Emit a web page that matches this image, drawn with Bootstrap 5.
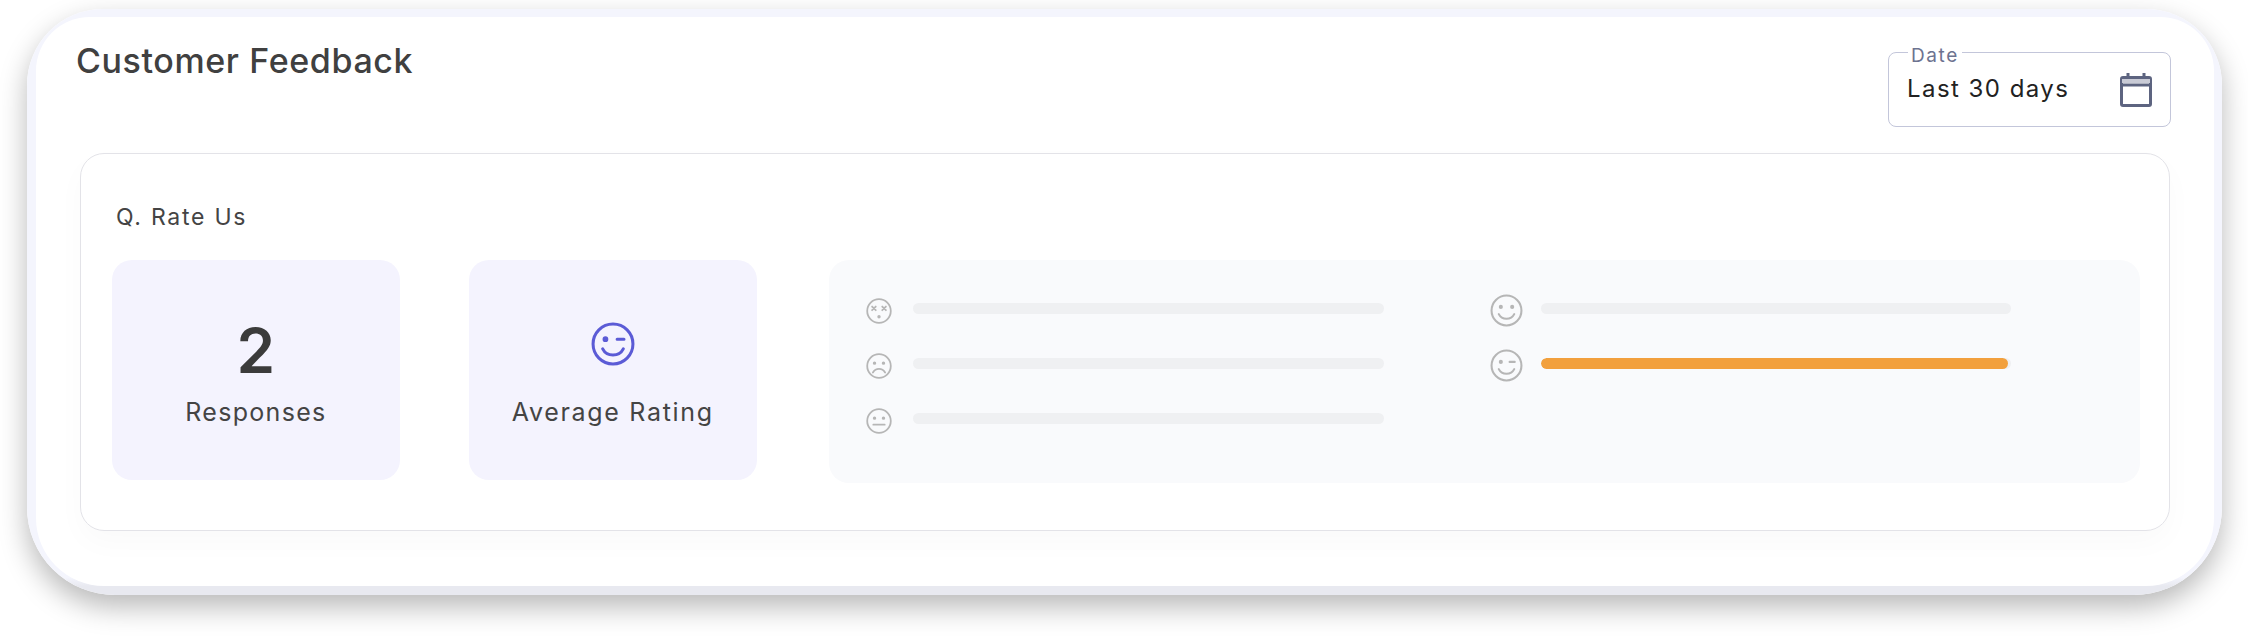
<!doctype html>
<html lang="en">
<head>
    <meta charset="UTF-8">
    <meta name="viewport" content="width=device-width, initial-scale=1">
    <title>Customer Feedback</title>
    <link href="https://cdn.jsdelivr.net/npm/bootstrap@5.3.2/dist/css/bootstrap.min.css" rel="stylesheet">
    <style>
        html, body { height: 100%; }
        body { background: #fff; font-family: Inter, "Liberation Sans", sans-serif; color: #404040; }
        .fb-page { height: 638px; padding: 9px 26px 0 27px; overflow: hidden; }
        .fb-frame { height: 586px; padding: 8px 8px 9px 9px; border-radius: 76px 76px 88px 88px; background: linear-gradient(#f4f5fd 0, #f4f5fd 97%, #e8e9f0 98.500%); box-shadow: 0 12px 28px rgba(0,0,0,.28); }
        .fb-sheet { height: 100%; padding: 0 44px 0 44px; border-radius: 54px 54px 68px 68px; background: #fff; }
        .fb-head { height: 136px; }
        .fb-title { margin: 24px 0 0 -4px; font-size: 34px; font-weight: 500; letter-spacing: .6px; color: #404040; }
        .fb-date { width: 283px; height: 75px; margin: 35px -1px 0 0; padding: 0 18px 2px 18px; border: 1px solid #c3c6da; border-radius: 8px; }
        .fb-date svg { margin-top: 2px; }
        .fb-date-label { top: -7px; left: 19px; padding: 0 3px; background: #fff; font-size: 19px; line-height: 20px; letter-spacing: 1.600px; color: #6d7390; }
        .fb-date-value { font-size: 24px; letter-spacing: 1.450px; color: #222; }
        .fb-card { height: 378px; padding: 48px 29px 0 31px; border: 1px solid #e3e3e8; border-radius: 24px; box-shadow: 0 12px 30px rgba(0,0,0,.025); }
        .fb-question { margin: 0 0 28px 4px; font-size: 23px; line-height: 30px; letter-spacing: 1.750px; color: #444; }
        .fb-stat { width: 288px; height: 220px; border-radius: 20px; background: #f4f3fe; }
        .fb-stat + .fb-stat { margin-left: 69px; }
        .fb-num { height: 72px; font-size: 62px; line-height: 70px; padding-top: 4px; font-weight: 600; color: #3b3b3b; }
        .fb-wink { margin-bottom: 13px; }
        .fb-label { margin-top: 12px; font-size: 25px; line-height: 32px; letter-spacing: 1.300px; color: #444; }
        .fb-label-wide { letter-spacing: 1.700px; }
        .fb-panel { display: grid; grid-template-columns: 624px 521px; grid-auto-rows: 55px; align-content: start; width: 1312px; height: 223px; margin-left: 72px; padding: 23px 0 0 37px; border-radius: 20px; background: #f9fafc; }
        .fb-row { display: flex; align-items: center; }
        .fb-smiley { flex: none; color: #b6b6b6; }
        .fb-row .progress { height: 11px; margin-bottom: 4px; border-radius: 6px; background: #eff0f2; }
        .fb-row .progress-bar { background: #f2a03d; border-radius: 6px; }
        .fb-left .progress { width: 471px; margin-left: 21px; }
        .fb-right .progress { width: 470px; margin-left: 18px; }
    </style>
</head>
<body>
<svg width="0" height="0" class="d-block">
    <defs>
        <g id="s-dead"><circle cx="16" cy="16" r="14.500"/><path d="M7.500 10.500l4.500 4.500M12 10.500l-4.500 4.500M20 10.500l4.500 4.500M24.500 10.500l-4.500 4.500"/><circle cx="16" cy="23" r="1" fill="currentColor"/></g>
        <g id="s-sad"><circle cx="16" cy="16" r="14.500"/><circle cx="10.500" cy="12.500" r="1" fill="currentColor"/><circle cx="21.500" cy="12.500" r="1" fill="currentColor"/><path d="M8.500 24c3.500-6 11.500-6 15 0"/></g>
        <g id="s-neutral"><circle cx="16" cy="16" r="14.500"/><circle cx="10.500" cy="12.500" r="1" fill="currentColor"/><circle cx="21.500" cy="12.500" r="1" fill="currentColor"/><path d="M9 20.500h14"/></g>
        <g id="s-smile"><circle cx="16" cy="16" r="14.500"/><circle cx="10.500" cy="12.500" r="1" fill="currentColor"/><circle cx="21.500" cy="12.500" r="1" fill="currentColor"/><path d="M8.500 19.500c3 6 12 6 15 0"/></g>
        <g id="s-wink"><circle cx="16" cy="16" r="14.500"/><circle cx="10.500" cy="12.500" r="1" fill="currentColor"/><path d="M19 12.500h5M8.500 19.500c3 6 12 6 15 0"/></g>
    </defs>
</svg>
<div class="fb-page">
<div class="fb-frame">
    <div class="fb-sheet">
        <div class="fb-head d-flex justify-content-between align-items-start">
            <h1 class="fb-title">Customer Feedback</h1>
            <div class="fb-date position-relative d-flex justify-content-between align-items-center">
                <span class="fb-date-label position-absolute">Date</span>
                <span class="fb-date-value">Last 30 days</span>
                <svg width="32" height="34" viewBox="0 0 32 34" fill="none" stroke="#5d6480" stroke-width="3">
                    <rect x="1.500" y="4.500" width="29" height="28" rx="1.500"/>
                    <path d="M2 8h28" stroke="#c9cbd6" stroke-width="4"/>
                    <path d="M1 12h30M8 0v6M24 0v6"/>
                </svg>
            </div>
        </div>
        <div class="fb-card">
            <p class="fb-question">Q. Rate Us</p>
            <div class="d-flex">
                <div class="fb-stat d-flex flex-column align-items-center justify-content-center">
                    <div class="fb-num">2</div>
                    <div class="fb-label">Responses</div>
                </div>
                <div class="fb-stat d-flex flex-column align-items-center justify-content-center">
                    <div class="fb-num d-flex align-items-center">
                        <svg class="fb-wink" width="44" height="44" viewBox="0 0 32 32" fill="none" stroke="#5b5bd6" stroke-width="2.200" stroke-linecap="round" color="#5b5bd6"><use href="#s-wink"/></svg>
                    </div>
                    <div class="fb-label fb-label-wide">Average Rating</div>
                </div>
                <div class="fb-panel">
                    <div class="fb-left fb-row">
                        <svg class="fb-smiley" width="26" height="26" viewBox="0 0 32 32" fill="none" stroke="currentColor" stroke-width="2.200" stroke-linecap="round"><use href="#s-dead"/></svg>
                        <div class="progress"><div class="progress-bar" style="width:0%"></div></div>
                    </div>
                    <div class="fb-right fb-row">
                        <svg class="fb-smiley" width="33" height="33" viewBox="0 0 32 32" fill="none" stroke="currentColor" stroke-width="2" stroke-linecap="round"><use href="#s-smile"/></svg>
                        <div class="progress"><div class="progress-bar" style="width:0%"></div></div>
                    </div>
                    <div class="fb-left fb-row">
                        <svg class="fb-smiley" width="26" height="26" viewBox="0 0 32 32" fill="none" stroke="currentColor" stroke-width="2.200" stroke-linecap="round"><use href="#s-sad"/></svg>
                        <div class="progress"><div class="progress-bar" style="width:0%"></div></div>
                    </div>
                    <div class="fb-right fb-row">
                        <svg class="fb-smiley" width="33" height="33" viewBox="0 0 32 32" fill="none" stroke="currentColor" stroke-width="2" stroke-linecap="round"><use href="#s-wink"/></svg>
                        <div class="progress"><div class="progress-bar" style="width:99.400%"></div></div>
                    </div>
                    <div class="fb-left fb-row">
                        <svg class="fb-smiley" width="26" height="26" viewBox="0 0 32 32" fill="none" stroke="currentColor" stroke-width="2.200" stroke-linecap="round"><use href="#s-neutral"/></svg>
                        <div class="progress"><div class="progress-bar" style="width:0%"></div></div>
                    </div>
                </div>
            </div>
        </div>
    </div>
</div>
</div>
<script src="https://cdn.jsdelivr.net/npm/bootstrap@5.3.2/dist/js/bootstrap.bundle.min.js"></script>
</body>
</html>
